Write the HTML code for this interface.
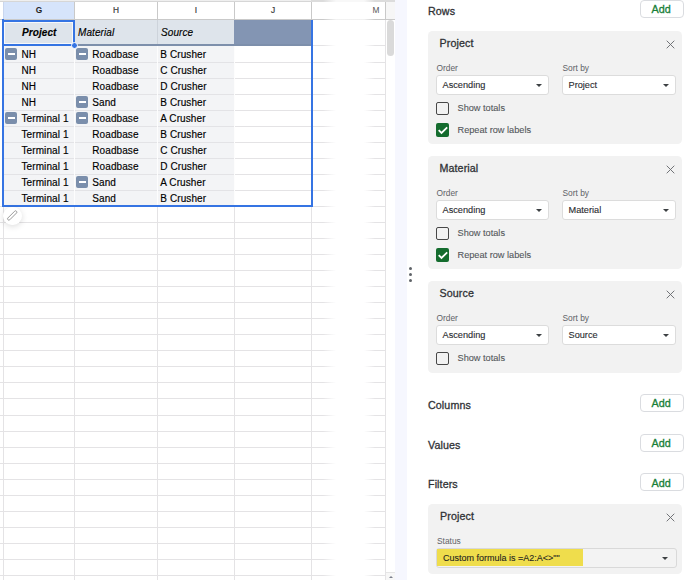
<!DOCTYPE html><html><head><meta charset="utf-8"><style>
*{margin:0;padding:0;box-sizing:border-box}
html,body{width:696px;height:580px;overflow:hidden;background:#fff;font-family:"Liberation Sans",sans-serif}
.abs{position:absolute}
.t{position:absolute;white-space:nowrap;line-height:1}
.cell{position:absolute;white-space:nowrap;font-size:10px;color:#000;line-height:1;-webkit-text-stroke:0.15px #000;letter-spacing:0.09px}
.minus{position:absolute;width:12.3px;height:12px;background:#7a8eab;border-radius:2px}
.minus:after{content:"";position:absolute;left:2.8px;top:5.3px;width:7px;height:1.8px;background:#fff}
.card{position:absolute;left:428px;width:254px;background:#f2f2f2;border-radius:4.5px}
.ttl{position:absolute;font-size:10.7px;color:#303236;white-space:nowrap;line-height:1;-webkit-text-stroke:0.3px #303236;letter-spacing:0.1px}
.lbl{position:absolute;font-size:8.4px;color:#5f6368;white-space:nowrap;line-height:1}
.dd{position:absolute;background:#fff;border:1px solid #dcdcdc;border-radius:3px;height:20px}
.ddt{position:absolute;left:5px;top:4.5px;font-size:9.2px;color:#2a2c30;-webkit-text-stroke:0.12px #2a2c30;white-space:nowrap;line-height:1}
.arr{position:absolute;width:0;height:0;border-left:3.5px solid transparent;border-right:3.5px solid transparent;border-top:3.5px solid #3c4043}
.cb{position:absolute;width:13.5px;height:13.5px;border:1.8px solid #474747;border-radius:2px}
.cbon{position:absolute;width:13.5px;height:14px;background:#146c2e;border-radius:2px}
.cbt{position:absolute;font-size:9.2px;color:#54575b;-webkit-text-stroke:0.1px #54575b;white-space:nowrap;line-height:1}
.add{position:absolute;left:640px;width:44px;height:18px;border:1px solid #dadce0;border-radius:4px;background:#fff}
.addt{position:absolute;left:10.5px;top:3.5px;font-size:10.8px;color:#188038;line-height:1;-webkit-text-stroke:0.3px #188038}
.x{position:absolute;width:9px;height:9px}
</style></head><body>

<div class="abs" style="left:0;top:0;width:311px;height:1px;background:#efefef"></div>
<div class="abs" style="left:0;top:1px;width:311px;height:1px;background:#d6d6d6"></div>
<div class="abs" style="left:311px;top:0;width:84px;height:2px;background:linear-gradient(90deg,#dcdcdc 0,#dcdcdc 12px,rgba(220,220,220,0.2) 25px,rgba(220,220,220,0.2) 53px,#dcdcdc 64px)"></div>
<div class="abs" style="left:3px;top:2px;width:71px;height:17px;background:#d6e4fb"></div>
<div class="abs" style="left:0;top:19px;width:311px;height:1px;background:#c9c9c9"></div>
<div class="abs" style="left:311px;top:19px;width:84px;height:1px;background:linear-gradient(90deg,#c9c9c9 0,#c9c9c9 12px,rgba(201,201,201,0.25) 25px,rgba(201,201,201,0.25) 53px,#c9c9c9 64px)"></div>
<div class="abs" style="left:386px;top:2px;width:9px;height:17px;background:#f6f6f6"></div>
<div class="abs" style="left:74px;top:2px;width:1px;height:17px;background:#c9c9c9"></div>
<div class="abs" style="left:157px;top:2px;width:1px;height:17px;background:#c9c9c9"></div>
<div class="abs" style="left:234px;top:2px;width:1px;height:17px;background:#c9c9c9"></div>
<div class="abs" style="left:311px;top:2px;width:1px;height:17px;background:#c9c9c9"></div>
<div class="abs" style="left:385px;top:2px;width:1px;height:17px;background:#c9c9c9"></div>
<div class="abs" style="left:3px;top:2px;width:1px;height:17px;background:#c9d6ee"></div>
<div class="t" style="left:19px;width:40px;text-align:center;top:6px;font-size:8.3px;font-weight:bold;color:#1f1f1f">G</div>
<div class="t" style="left:96px;width:40px;text-align:center;top:6px;font-size:8.3px;font-weight:normal;color:#3a3a3a;-webkit-text-stroke:0.2px #3a3a3a">H</div>
<div class="t" style="left:176px;width:40px;text-align:center;top:6px;font-size:8.3px;font-weight:normal;color:#3a3a3a;-webkit-text-stroke:0.2px #3a3a3a">I</div>
<div class="t" style="left:253px;width:40px;text-align:center;top:6px;font-size:8.3px;font-weight:normal;color:#3a3a3a;-webkit-text-stroke:0.2px #3a3a3a">J</div>
<div class="t" style="left:356px;width:40px;text-align:center;top:6px;font-size:8.3px;font-weight:normal;color:#555">M</div>
<div class="abs" style="left:3px;top:20px;width:1px;height:560px;background:#e4e3e5"></div>
<div class="abs" style="left:74px;top:20px;width:1px;height:560px;background:#e4e3e5"></div>
<div class="abs" style="left:157px;top:20px;width:1px;height:560px;background:#e4e3e5"></div>
<div class="abs" style="left:234px;top:20px;width:1px;height:560px;background:#e4e3e5"></div>
<div class="abs" style="left:311px;top:20px;width:1px;height:560px;background:#e4e3e5"></div>
<div class="abs" style="left:385px;top:20px;width:1px;height:560px;background:#e4e3e5"></div>
<div class="abs" style="left:3px;top:62px;width:308px;height:1px;background:#e4e3e5"></div>
<div class="abs" style="left:311px;top:62px;width:75px;height:1px;background:linear-gradient(90deg,#e4e3e5 0,#e4e3e5 12px,rgba(228,227,229,0) 25px,rgba(228,227,229,0) 53px,#e4e3e5 64px)"></div>
<div class="abs" style="left:3px;top:78px;width:308px;height:1px;background:#e4e3e5"></div>
<div class="abs" style="left:311px;top:78px;width:75px;height:1px;background:linear-gradient(90deg,#e4e3e5 0,#e4e3e5 12px,rgba(228,227,229,0) 25px,rgba(228,227,229,0) 53px,#e4e3e5 64px)"></div>
<div class="abs" style="left:3px;top:94px;width:308px;height:1px;background:#e4e3e5"></div>
<div class="abs" style="left:311px;top:94px;width:75px;height:1px;background:linear-gradient(90deg,#e4e3e5 0,#e4e3e5 12px,rgba(228,227,229,0) 25px,rgba(228,227,229,0) 53px,#e4e3e5 64px)"></div>
<div class="abs" style="left:3px;top:110px;width:308px;height:1px;background:#e4e3e5"></div>
<div class="abs" style="left:311px;top:110px;width:75px;height:1px;background:linear-gradient(90deg,#e4e3e5 0,#e4e3e5 12px,rgba(228,227,229,0) 25px,rgba(228,227,229,0) 53px,#e4e3e5 64px)"></div>
<div class="abs" style="left:3px;top:126px;width:308px;height:1px;background:#e4e3e5"></div>
<div class="abs" style="left:311px;top:126px;width:75px;height:1px;background:linear-gradient(90deg,#e4e3e5 0,#e4e3e5 12px,rgba(228,227,229,0) 25px,rgba(228,227,229,0) 53px,#e4e3e5 64px)"></div>
<div class="abs" style="left:3px;top:142px;width:308px;height:1px;background:#e4e3e5"></div>
<div class="abs" style="left:311px;top:142px;width:75px;height:1px;background:linear-gradient(90deg,#e4e3e5 0,#e4e3e5 12px,rgba(228,227,229,0) 25px,rgba(228,227,229,0) 53px,#e4e3e5 64px)"></div>
<div class="abs" style="left:3px;top:158px;width:308px;height:1px;background:#e4e3e5"></div>
<div class="abs" style="left:311px;top:158px;width:75px;height:1px;background:linear-gradient(90deg,#e4e3e5 0,#e4e3e5 12px,rgba(228,227,229,0) 25px,rgba(228,227,229,0) 53px,#e4e3e5 64px)"></div>
<div class="abs" style="left:3px;top:174px;width:308px;height:1px;background:#e4e3e5"></div>
<div class="abs" style="left:311px;top:174px;width:75px;height:1px;background:linear-gradient(90deg,#e4e3e5 0,#e4e3e5 12px,rgba(228,227,229,0) 25px,rgba(228,227,229,0) 53px,#e4e3e5 64px)"></div>
<div class="abs" style="left:3px;top:190px;width:308px;height:1px;background:#e4e3e5"></div>
<div class="abs" style="left:311px;top:190px;width:75px;height:1px;background:linear-gradient(90deg,#e4e3e5 0,#e4e3e5 12px,rgba(228,227,229,0) 25px,rgba(228,227,229,0) 53px,#e4e3e5 64px)"></div>
<div class="abs" style="left:0;top:206px;width:311px;height:1px;background:#e4e3e5"></div>
<div class="abs" style="left:311px;top:206px;width:75px;height:1px;background:linear-gradient(90deg,#e4e3e5 0,#e4e3e5 12px,rgba(228,227,229,0) 25px,rgba(228,227,229,0) 53px,#e4e3e5 64px)"></div>
<div class="abs" style="left:0;top:222px;width:311px;height:1px;background:#e4e3e5"></div>
<div class="abs" style="left:311px;top:222px;width:75px;height:1px;background:linear-gradient(90deg,#e4e3e5 0,#e4e3e5 12px,rgba(228,227,229,0) 25px,rgba(228,227,229,0) 53px,#e4e3e5 64px)"></div>
<div class="abs" style="left:0;top:238px;width:311px;height:1px;background:#e4e3e5"></div>
<div class="abs" style="left:311px;top:238px;width:75px;height:1px;background:linear-gradient(90deg,#e4e3e5 0,#e4e3e5 12px,rgba(228,227,229,0) 25px,rgba(228,227,229,0) 53px,#e4e3e5 64px)"></div>
<div class="abs" style="left:0;top:254px;width:311px;height:1px;background:#e4e3e5"></div>
<div class="abs" style="left:311px;top:254px;width:75px;height:1px;background:linear-gradient(90deg,#e4e3e5 0,#e4e3e5 12px,rgba(228,227,229,0) 25px,rgba(228,227,229,0) 53px,#e4e3e5 64px)"></div>
<div class="abs" style="left:0;top:270px;width:311px;height:1px;background:#e4e3e5"></div>
<div class="abs" style="left:311px;top:270px;width:75px;height:1px;background:linear-gradient(90deg,#e4e3e5 0,#e4e3e5 12px,rgba(228,227,229,0) 25px,rgba(228,227,229,0) 53px,#e4e3e5 64px)"></div>
<div class="abs" style="left:0;top:286px;width:311px;height:1px;background:#e4e3e5"></div>
<div class="abs" style="left:311px;top:286px;width:75px;height:1px;background:linear-gradient(90deg,#e4e3e5 0,#e4e3e5 12px,rgba(228,227,229,0) 25px,rgba(228,227,229,0) 53px,#e4e3e5 64px)"></div>
<div class="abs" style="left:0;top:302px;width:311px;height:1px;background:#e4e3e5"></div>
<div class="abs" style="left:311px;top:302px;width:75px;height:1px;background:linear-gradient(90deg,#e4e3e5 0,#e4e3e5 12px,rgba(228,227,229,0) 25px,rgba(228,227,229,0) 53px,#e4e3e5 64px)"></div>
<div class="abs" style="left:0;top:318px;width:311px;height:1px;background:#e4e3e5"></div>
<div class="abs" style="left:311px;top:318px;width:75px;height:1px;background:linear-gradient(90deg,#e4e3e5 0,#e4e3e5 12px,rgba(228,227,229,0) 25px,rgba(228,227,229,0) 53px,#e4e3e5 64px)"></div>
<div class="abs" style="left:0;top:334px;width:311px;height:1px;background:#e4e3e5"></div>
<div class="abs" style="left:311px;top:334px;width:75px;height:1px;background:linear-gradient(90deg,#e4e3e5 0,#e4e3e5 12px,rgba(228,227,229,0) 25px,rgba(228,227,229,0) 53px,#e4e3e5 64px)"></div>
<div class="abs" style="left:0;top:350px;width:311px;height:1px;background:#e4e3e5"></div>
<div class="abs" style="left:311px;top:350px;width:75px;height:1px;background:linear-gradient(90deg,#e4e3e5 0,#e4e3e5 12px,rgba(228,227,229,0) 25px,rgba(228,227,229,0) 53px,#e4e3e5 64px)"></div>
<div class="abs" style="left:0;top:366px;width:311px;height:1px;background:#e4e3e5"></div>
<div class="abs" style="left:311px;top:366px;width:75px;height:1px;background:linear-gradient(90deg,#e4e3e5 0,#e4e3e5 12px,rgba(228,227,229,0) 25px,rgba(228,227,229,0) 53px,#e4e3e5 64px)"></div>
<div class="abs" style="left:0;top:382px;width:311px;height:1px;background:#e4e3e5"></div>
<div class="abs" style="left:311px;top:382px;width:75px;height:1px;background:linear-gradient(90deg,#e4e3e5 0,#e4e3e5 12px,rgba(228,227,229,0) 25px,rgba(228,227,229,0) 53px,#e4e3e5 64px)"></div>
<div class="abs" style="left:0;top:398px;width:311px;height:1px;background:#e4e3e5"></div>
<div class="abs" style="left:311px;top:398px;width:75px;height:1px;background:linear-gradient(90deg,#e4e3e5 0,#e4e3e5 12px,rgba(228,227,229,0) 25px,rgba(228,227,229,0) 53px,#e4e3e5 64px)"></div>
<div class="abs" style="left:0;top:415px;width:311px;height:1px;background:#e4e3e5"></div>
<div class="abs" style="left:311px;top:415px;width:75px;height:1px;background:linear-gradient(90deg,#e4e3e5 0,#e4e3e5 12px,rgba(228,227,229,0) 25px,rgba(228,227,229,0) 53px,#e4e3e5 64px)"></div>
<div class="abs" style="left:0;top:431px;width:311px;height:1px;background:#e4e3e5"></div>
<div class="abs" style="left:311px;top:431px;width:75px;height:1px;background:linear-gradient(90deg,#e4e3e5 0,#e4e3e5 12px,rgba(228,227,229,0) 25px,rgba(228,227,229,0) 53px,#e4e3e5 64px)"></div>
<div class="abs" style="left:0;top:447px;width:311px;height:1px;background:#e4e3e5"></div>
<div class="abs" style="left:311px;top:447px;width:75px;height:1px;background:linear-gradient(90deg,#e4e3e5 0,#e4e3e5 12px,rgba(228,227,229,0) 25px,rgba(228,227,229,0) 53px,#e4e3e5 64px)"></div>
<div class="abs" style="left:0;top:463px;width:311px;height:1px;background:#e4e3e5"></div>
<div class="abs" style="left:311px;top:463px;width:75px;height:1px;background:linear-gradient(90deg,#e4e3e5 0,#e4e3e5 12px,rgba(228,227,229,0) 25px,rgba(228,227,229,0) 53px,#e4e3e5 64px)"></div>
<div class="abs" style="left:0;top:479px;width:311px;height:1px;background:#e4e3e5"></div>
<div class="abs" style="left:311px;top:479px;width:75px;height:1px;background:linear-gradient(90deg,#e4e3e5 0,#e4e3e5 12px,rgba(228,227,229,0) 25px,rgba(228,227,229,0) 53px,#e4e3e5 64px)"></div>
<div class="abs" style="left:0;top:495px;width:311px;height:1px;background:#e4e3e5"></div>
<div class="abs" style="left:311px;top:495px;width:75px;height:1px;background:linear-gradient(90deg,#e4e3e5 0,#e4e3e5 12px,rgba(228,227,229,0) 25px,rgba(228,227,229,0) 53px,#e4e3e5 64px)"></div>
<div class="abs" style="left:0;top:511px;width:311px;height:1px;background:#e4e3e5"></div>
<div class="abs" style="left:311px;top:511px;width:75px;height:1px;background:linear-gradient(90deg,#e4e3e5 0,#e4e3e5 12px,rgba(228,227,229,0) 25px,rgba(228,227,229,0) 53px,#e4e3e5 64px)"></div>
<div class="abs" style="left:0;top:527px;width:311px;height:1px;background:#e4e3e5"></div>
<div class="abs" style="left:311px;top:527px;width:75px;height:1px;background:linear-gradient(90deg,#e4e3e5 0,#e4e3e5 12px,rgba(228,227,229,0) 25px,rgba(228,227,229,0) 53px,#e4e3e5 64px)"></div>
<div class="abs" style="left:0;top:543px;width:311px;height:1px;background:#e4e3e5"></div>
<div class="abs" style="left:311px;top:543px;width:75px;height:1px;background:linear-gradient(90deg,#e4e3e5 0,#e4e3e5 12px,rgba(228,227,229,0) 25px,rgba(228,227,229,0) 53px,#e4e3e5 64px)"></div>
<div class="abs" style="left:0;top:559px;width:311px;height:1px;background:#e4e3e5"></div>
<div class="abs" style="left:311px;top:559px;width:75px;height:1px;background:linear-gradient(90deg,#e4e3e5 0,#e4e3e5 12px,rgba(228,227,229,0) 25px,rgba(228,227,229,0) 53px,#e4e3e5 64px)"></div>
<div class="abs" style="left:0;top:575px;width:311px;height:1px;background:#e4e3e5"></div>
<div class="abs" style="left:311px;top:575px;width:75px;height:1px;background:linear-gradient(90deg,#e4e3e5 0,#e4e3e5 12px,rgba(228,227,229,0) 25px,rgba(228,227,229,0) 53px,#e4e3e5 64px)"></div>
<div class="abs" style="left:311px;top:45px;width:75px;height:1px;background:linear-gradient(90deg,#e4e3e5 0,#e4e3e5 12px,rgba(228,227,229,0) 25px,rgba(228,227,229,0) 53px,#e4e3e5 64px)"></div>
<div class="abs" style="left:4px;top:20px;width:230px;height:24px;background:#dee4eb"></div>
<div class="abs" style="left:74px;top:20px;width:1px;height:24px;background:#cdd3db"></div>
<div class="abs" style="left:157px;top:20px;width:1px;height:24px;background:#cdd3db"></div>
<div class="abs" style="left:234px;top:20px;width:77px;height:26px;background:#8395b3"></div>
<div class="abs" style="left:4px;top:44px;width:307px;height:2px;background:#7d8fab"></div>
<div class="abs" style="left:4px;top:46px;width:230px;height:160px;background:#f3f4f6"></div>
<div class="abs" style="left:4px;top:62px;width:230px;height:1px;background:#e3e3e6"></div>
<div class="abs" style="left:4px;top:78px;width:230px;height:1px;background:#e3e3e6"></div>
<div class="abs" style="left:4px;top:94px;width:230px;height:1px;background:#e3e3e6"></div>
<div class="abs" style="left:4px;top:110px;width:230px;height:1px;background:#e3e3e6"></div>
<div class="abs" style="left:4px;top:126px;width:230px;height:1px;background:#e3e3e6"></div>
<div class="abs" style="left:4px;top:142px;width:230px;height:1px;background:#e3e3e6"></div>
<div class="abs" style="left:4px;top:158px;width:230px;height:1px;background:#e3e3e6"></div>
<div class="abs" style="left:4px;top:174px;width:230px;height:1px;background:#e3e3e6"></div>
<div class="abs" style="left:4px;top:190px;width:230px;height:1px;background:#e3e3e6"></div>
<div class="abs" style="left:234px;top:62px;width:77px;height:1px;background:#e4e3e5"></div>
<div class="abs" style="left:234px;top:78px;width:77px;height:1px;background:#e4e3e5"></div>
<div class="abs" style="left:234px;top:94px;width:77px;height:1px;background:#e4e3e5"></div>
<div class="abs" style="left:234px;top:110px;width:77px;height:1px;background:#e4e3e5"></div>
<div class="abs" style="left:234px;top:126px;width:77px;height:1px;background:#e4e3e5"></div>
<div class="abs" style="left:234px;top:142px;width:77px;height:1px;background:#e4e3e5"></div>
<div class="abs" style="left:234px;top:158px;width:77px;height:1px;background:#e4e3e5"></div>
<div class="abs" style="left:234px;top:174px;width:77px;height:1px;background:#e4e3e5"></div>
<div class="abs" style="left:234px;top:190px;width:77px;height:1px;background:#e4e3e5"></div>
<div class="abs" style="left:74px;top:46px;width:1px;height:160px;background:#fdfdfd"></div>
<div class="abs" style="left:157px;top:46px;width:1px;height:160px;background:#fdfdfd"></div>
<div class="abs" style="left:234px;top:46px;width:1px;height:160px;background:#fdfdfd"></div>
<div class="cell" style="left:22px;top:28px;font-weight:bold;font-style:italic">Project</div>
<div class="cell" style="left:78px;top:28px;font-style:italic">Material</div>
<div class="cell" style="left:161px;top:28px;font-style:italic">Source</div>
<div class="minus" style="left:5px;top:48px"></div>
<div class="minus" style="left:76px;top:48px"></div>
<div class="cell" style="left:21.5px;top:49.6px">NH</div>
<div class="cell" style="left:92.3px;top:49.6px">Roadbase</div>
<div class="cell" style="left:160.3px;top:49.6px">B Crusher</div>
<div class="cell" style="left:21.5px;top:65.6px">NH</div>
<div class="cell" style="left:92.3px;top:65.6px">Roadbase</div>
<div class="cell" style="left:160.3px;top:65.6px">C Crusher</div>
<div class="cell" style="left:21.5px;top:81.6px">NH</div>
<div class="cell" style="left:92.3px;top:81.6px">Roadbase</div>
<div class="cell" style="left:160.3px;top:81.6px">D Crusher</div>
<div class="minus" style="left:76px;top:96px"></div>
<div class="cell" style="left:21.5px;top:97.6px">NH</div>
<div class="cell" style="left:92.3px;top:97.6px">Sand</div>
<div class="cell" style="left:160.3px;top:97.6px">B Crusher</div>
<div class="minus" style="left:5px;top:112px"></div>
<div class="minus" style="left:76px;top:112px"></div>
<div class="cell" style="left:21.5px;top:113.6px">Terminal 1</div>
<div class="cell" style="left:92.3px;top:113.6px">Roadbase</div>
<div class="cell" style="left:160.3px;top:113.6px">A Crusher</div>
<div class="cell" style="left:21.5px;top:129.6px">Terminal 1</div>
<div class="cell" style="left:92.3px;top:129.6px">Roadbase</div>
<div class="cell" style="left:160.3px;top:129.6px">B Crusher</div>
<div class="cell" style="left:21.5px;top:145.6px">Terminal 1</div>
<div class="cell" style="left:92.3px;top:145.6px">Roadbase</div>
<div class="cell" style="left:160.3px;top:145.6px">C Crusher</div>
<div class="cell" style="left:21.5px;top:161.6px">Terminal 1</div>
<div class="cell" style="left:92.3px;top:161.6px">Roadbase</div>
<div class="cell" style="left:160.3px;top:161.6px">D Crusher</div>
<div class="minus" style="left:76px;top:176px"></div>
<div class="cell" style="left:21.5px;top:177.6px">Terminal 1</div>
<div class="cell" style="left:92.3px;top:177.6px">Sand</div>
<div class="cell" style="left:160.3px;top:177.6px">A Crusher</div>
<div class="cell" style="left:21.5px;top:193.6px">Terminal 1</div>
<div class="cell" style="left:92.3px;top:193.6px">Sand</div>
<div class="cell" style="left:160.3px;top:193.6px">B Crusher</div>
<div class="abs" style="left:2px;top:19px;width:2px;height:188px;background:#3574e3"></div>
<div class="abs" style="left:311px;top:20px;width:2px;height:187px;background:#3574e3"></div>
<div class="abs" style="left:2px;top:205px;width:311px;height:2px;background:#3574e3"></div>
<div class="abs" style="left:2px;top:20px;width:73px;height:26px;border:2px solid #3574e3"><div class="abs" style="left:0;top:0;right:0;bottom:0;border:1px solid rgba(255,255,255,.75)"></div></div>
<div class="abs" style="left:71px;top:42px;width:7px;height:7px;border-radius:50%;background:#3574e3;border:1px solid #fff"></div>
<div class="abs" style="left:3px;top:206.5px;width:18.5px;height:18.5px;border-radius:50%;background:#fff;box-shadow:0 1.5px 6px rgba(0,0,0,.14)"></div>
<svg class="abs" style="left:5px;top:208px" width="15" height="15" viewBox="0 0 15 15"><g transform="rotate(-45 7.2 7.5)"><rect x="1.2" y="6.2" width="12" height="2.6" rx="1.2" fill="none" stroke="#949494" stroke-width="0.9"/></g></svg>
<div class="abs" style="left:386px;top:20px;width:9px;height:560px;background:#fff"></div>
<div class="abs" style="left:387px;top:20px;width:7px;height:36px;border-radius:4px;background:#dadada"></div>
<div class="abs" style="left:386px;top:572px;width:9px;height:1px;background:#e6e6e6"></div>
<div class="abs" style="left:386px;top:573px;width:9px;height:7px;background:#f7f7f7"></div>
<div class="abs" style="left:388.5px;top:575.5px;width:0;height:0;border-left:2px solid transparent;border-right:2px solid transparent;border-bottom:2.5px solid #7a7f8c"></div>
<div class="abs" style="left:395px;top:0;width:12px;height:580px;background:#f6f7fe"></div>
<div class="abs" style="left:409px;top:266.5px;width:3px;height:3px;border-radius:50%;background:#5f6368"></div>
<div class="abs" style="left:409px;top:272.5px;width:3px;height:3px;border-radius:50%;background:#5f6368"></div>
<div class="abs" style="left:409px;top:278.5px;width:3px;height:3px;border-radius:50%;background:#5f6368"></div>
<div class="ttl" style="left:428px;top:5.800000000000001px">Rows</div>
<div class="add" style="top:-0.09999999999999964px"><div class="addt">Add</div></div>
<div class="ttl" style="left:428px;top:399.79999999999995px">Columns</div>
<div class="add" style="top:393.9px"><div class="addt">Add</div></div>
<div class="ttl" style="left:428px;top:439.5px">Values</div>
<div class="add" style="top:433.6px"><div class="addt">Add</div></div>
<div class="ttl" style="left:428px;top:479.2px">Filters</div>
<div class="add" style="top:473.3px"><div class="addt">Add</div></div>
<div class="card" style="top:31px;height:113px">
<div class="ttl" style="left:11.5px;top:7.0px">Project</div>
</div>
<svg class="abs" style="left:665.5px;top:40px" width="9" height="9" viewBox="0 0 9 9"><path d="M0.7 0.7 L8.3 8.3 M8.3 0.7 L0.7 8.3" stroke="#6a6d71" stroke-width="0.95"/></svg>
<div class="lbl" style="left:436.5px;top:63.7px">Order</div>
<div class="lbl" style="left:562.5px;top:63.7px">Sort by</div>
<div class="dd" style="left:435.5px;top:75px;width:113px"><div class="ddt" style="left:6px">Ascending</div><div class="arr" style="left:99.5px;top:7.5px"></div></div>
<div class="dd" style="left:561.5px;top:75px;width:114px"><div class="ddt" style="left:6px">Project</div><div class="arr" style="left:100.5px;top:7.5px"></div></div>
<div class="cb" style="left:435.5px;top:101.5px"></div>
<div class="cbt" style="left:457.5px;top:104.2px">Show totals</div>
<div class="cbon" style="left:435.5px;top:123.0px"><svg width="14" height="14" viewBox="0 0 14 14"><path d="M2.7 7.2 L5.5 10 L11.2 4.3" fill="none" stroke="#fff" stroke-width="1.8"/></svg></div>
<div class="cbt" style="left:457.5px;top:125.7px">Repeat row labels</div>
<div class="card" style="top:156px;height:113px">
<div class="ttl" style="left:11.5px;top:7.0px">Material</div>
</div>
<svg class="abs" style="left:665.5px;top:165px" width="9" height="9" viewBox="0 0 9 9"><path d="M0.7 0.7 L8.3 8.3 M8.3 0.7 L0.7 8.3" stroke="#6a6d71" stroke-width="0.95"/></svg>
<div class="lbl" style="left:436.5px;top:188.7px">Order</div>
<div class="lbl" style="left:562.5px;top:188.7px">Sort by</div>
<div class="dd" style="left:435.5px;top:200px;width:113px"><div class="ddt" style="left:6px">Ascending</div><div class="arr" style="left:99.5px;top:7.5px"></div></div>
<div class="dd" style="left:561.5px;top:200px;width:114px"><div class="ddt" style="left:6px">Material</div><div class="arr" style="left:100.5px;top:7.5px"></div></div>
<div class="cb" style="left:435.5px;top:226.5px"></div>
<div class="cbt" style="left:457.5px;top:229.2px">Show totals</div>
<div class="cbon" style="left:435.5px;top:248.0px"><svg width="14" height="14" viewBox="0 0 14 14"><path d="M2.7 7.2 L5.5 10 L11.2 4.3" fill="none" stroke="#fff" stroke-width="1.8"/></svg></div>
<div class="cbt" style="left:457.5px;top:250.7px">Repeat row labels</div>
<div class="card" style="top:281px;height:91.5px">
<div class="ttl" style="left:11.5px;top:7.0px">Source</div>
</div>
<svg class="abs" style="left:665.5px;top:290px" width="9" height="9" viewBox="0 0 9 9"><path d="M0.7 0.7 L8.3 8.3 M8.3 0.7 L0.7 8.3" stroke="#6a6d71" stroke-width="0.95"/></svg>
<div class="lbl" style="left:436.5px;top:313.7px">Order</div>
<div class="lbl" style="left:562.5px;top:313.7px">Sort by</div>
<div class="dd" style="left:435.5px;top:325px;width:113px"><div class="ddt" style="left:6px">Ascending</div><div class="arr" style="left:99.5px;top:7.5px"></div></div>
<div class="dd" style="left:561.5px;top:325px;width:114px"><div class="ddt" style="left:6px">Source</div><div class="arr" style="left:100.5px;top:7.5px"></div></div>
<div class="cb" style="left:435.5px;top:351.5px"></div>
<div class="cbt" style="left:457.5px;top:354.2px">Show totals</div>
<div class="card" style="top:504px;height:70px">
<div class="ttl" style="left:12px;top:7.100000000000023px">Project</div>
</div>
<svg class="abs" style="left:665.5px;top:513px" width="9" height="9" viewBox="0 0 9 9"><path d="M0.7 0.7 L8.3 8.3 M8.3 0.7 L0.7 8.3" stroke="#6a6d71" stroke-width="0.95"/></svg>
<div class="lbl" style="left:437px;top:537px">Status</div>
<div class="dd" style="left:436px;top:548px;width:241px;height:20px;background:#f3f3f3;border-color:#d9d9d9"><div class="abs" style="left:0;top:0;width:146px;height:17.2px;background:#efdd4c"></div><div class="ddt" style="left:6px;top:4.8px;font-size:9px;color:#1f1f1f;-webkit-text-stroke:0.1px #1f1f1f">Custom formula is =A2:A&lt;&gt;""</div><div class="arr" style="left:224.5px;top:7.5px"></div></div>
</body></html>
